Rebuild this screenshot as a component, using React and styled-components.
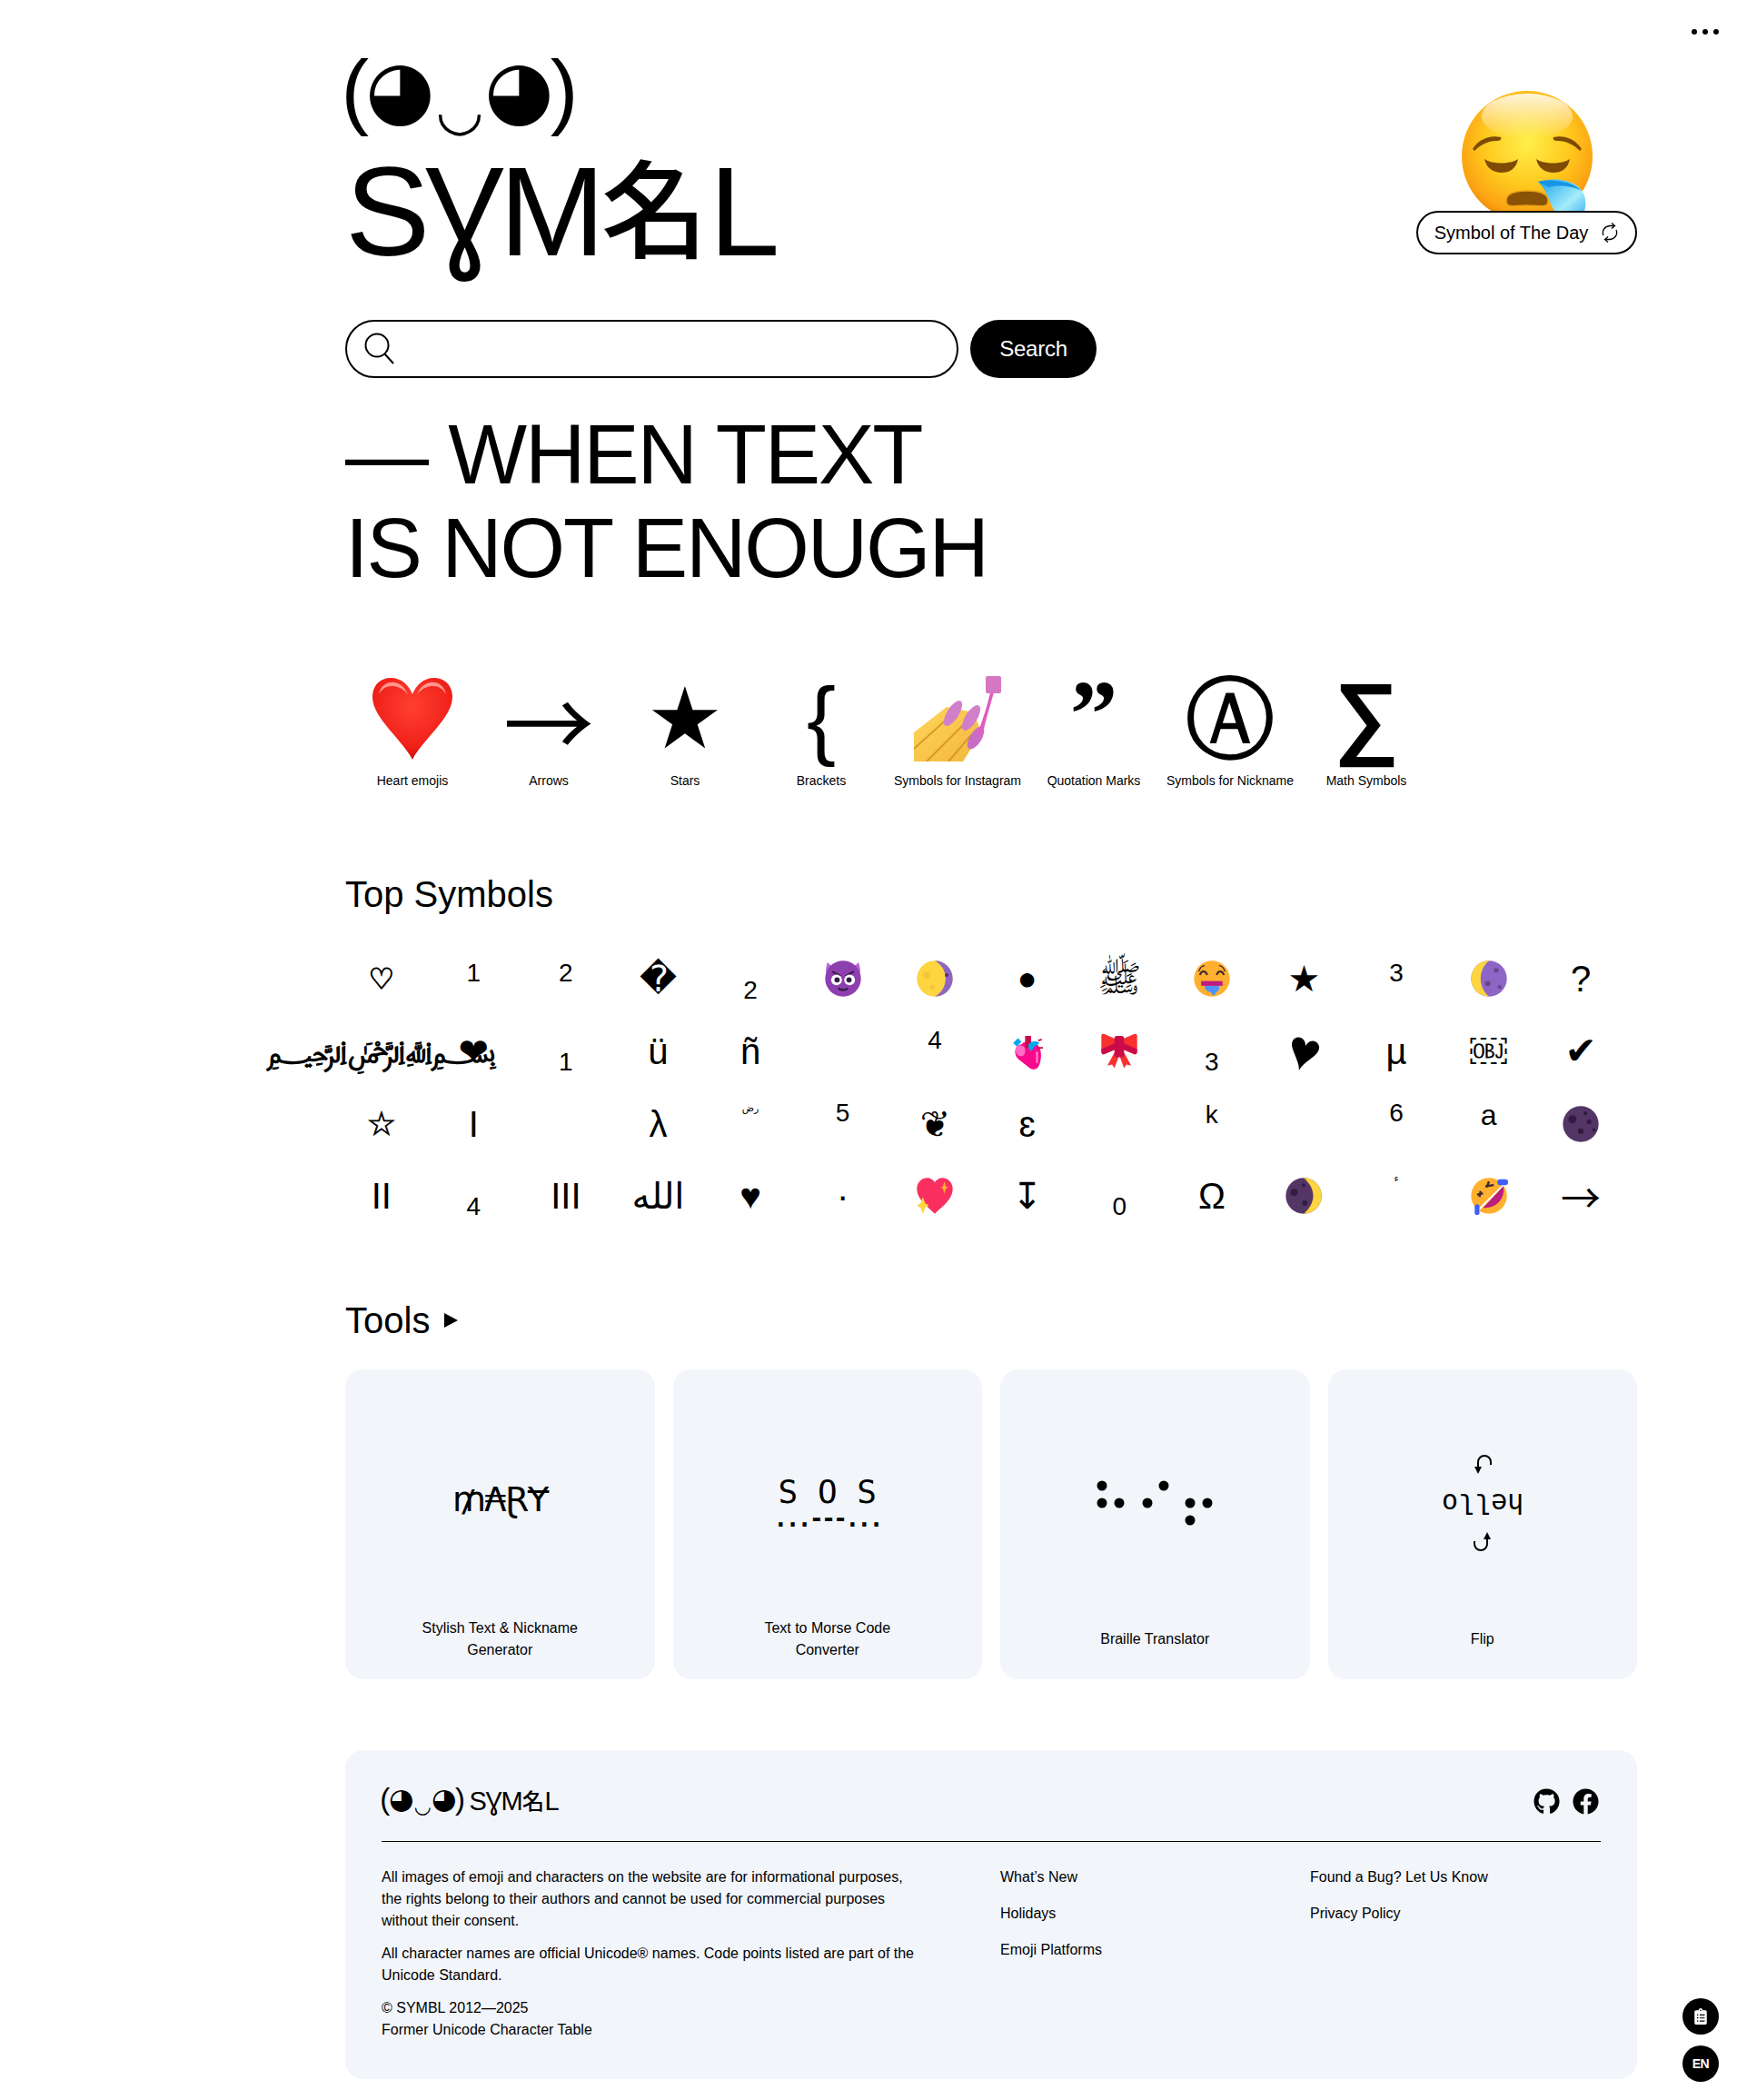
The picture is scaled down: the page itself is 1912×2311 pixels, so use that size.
import React from 'react';
import styled, { createGlobalStyle } from 'styled-components';
import { FaGithub, FaFacebook, FaClipboardList } from 'react-icons/fa';

const sans = '"Liberation Sans", "DejaVu Sans", "Noto Sans CJK SC", sans-serif';

const Global = createGlobalStyle`
    html, body {
        margin: 0;
        padding: 0;
        background: #fff;
        color: #000;
        font-family: ${sans};
    }
`;

const Page = styled.div`
    position: relative;
    box-sizing: border-box;
    width: 1912px;
    height: 2311px;
    padding: 53px 110px 0 380px;
    overflow: hidden;
`;
const MenuDots = styled.div`
    position: absolute;
    top: 32px;
    right: 20px;
    display: flex;
    gap: 6px;
    & > span {
        width: 6px;
        height: 6px;
        border-radius: 50%;
        background: #000;
    }
`;
const Header = styled.header`
    display: flex;
    justify-content: space-between;
    align-items: flex-start;
`;
const LogoCol = styled.div`
    display: flex;
    flex-direction: column;
`;
const Kaomoji = styled.div`
    display: flex;
    align-items: flex-start;
    height: ${({ $size }) => $size * 1.14}px;
    font-size: ${({ $size }) => $size}px;
    white-space: nowrap;
`;
const Paren = styled.span`
    font-size: 1em;
    line-height: 1.02em;
    margin: 0 -0.05em;
`;
const Eye = styled.span`
    font-family: "DejaVu Sans", sans-serif;
    font-size: 0.95em;
    line-height: 1.05em;
    margin: 0 0.01em;
`;
const Mouth = styled.span`
    font-family: "DejaVu Sans", sans-serif;
    font-size: 0.66em;
    line-height: 1em;
    margin-top: 0.62em;
`;
const Wordmark = styled.div`
    display: flex;
    align-items: baseline;
    height: ${({ $size }) => $size * 1.07}px;
    font-size: ${({ $size }) => $size}px;
    line-height: 1.07;
    letter-spacing: -0.04em;
    white-space: nowrap;
`;
const Kanji = styled.span`
    font-family: "Noto Sans CJK JP", sans-serif;
    font-size: 0.84em;
    font-weight: 500;
    letter-spacing: 0;
    transform: translateY(-0.05em);
    margin: 0 0.01em;
`;
const DayCol = styled.div`
    display: flex;
    flex-direction: column;
    align-items: center;
    margin-top: 47px;
`;
const DayFace = styled.div`
    width: 144px;
    height: 132px;
    overflow: hidden;
`;
const DayPill = styled.div`
    box-sizing: border-box;
    width: 243px;
    height: 48px;
    display: flex;
    align-items: center;
    justify-content: center;
    gap: 14px;
    background: #fff;
    border: 2px solid #000;
    border-radius: 24px;
    font-size: 20px;
`;
const SearchRow = styled.div`
    display: flex;
    gap: 13px;
    margin-top: 44px;
`;
const SearchBox = styled.div`
    box-sizing: border-box;
    width: 675px;
    height: 64px;
    display: flex;
    align-items: center;
    padding-left: 18px;
    border: 2px solid #000;
    border-radius: 32px;
`;
const SearchButton = styled.button`
    width: 139px;
    height: 64px;
    border: 0;
    border-radius: 32px;
    background: #000;
    color: #fff;
    font-family: ${sans};
    font-size: 24px;
    letter-spacing: -0.01em;
`;
const Tagline = styled.h1`
    margin: 33px 0 0;
    font-size: 92px;
    line-height: 103px;
    font-weight: 400;
    letter-spacing: -0.023em;
`;
const CategoryRow = styled.div`
    display: flex;
    margin-top: 86px;
    margin-left: -1px;
`;
const Category = styled.div`
    width: 150px;
    display: flex;
    flex-direction: column;
    align-items: center;
`;
const CategoryIcon = styled.div`
    height: 100px;
    display: flex;
    align-items: center;
    justify-content: center;
    font-family: ${({ $family }) => $family || '"DejaVu Sans", sans-serif'};
    font-weight: ${({ $weight }) => $weight || 400};
    font-size: ${({ $size }) => $size || 100}px;
    -webkit-text-stroke: ${({ $stroke }) => $stroke || 0}px #000;
    line-height: 100px;
    white-space: nowrap;
    transform: translateY(${({ $shift }) => $shift || 0}px);
`;
const CategoryLabel = styled.div`
    margin-top: 9px;
    font-size: 14px;
    line-height: 18px;
    white-space: nowrap;
`;
const SectionTitle = styled.h2`
    display: flex;
    align-items: center;
    gap: 16px;
    margin: ${({ $top }) => $top}px 0 0;
    font-size: 40px;
    line-height: 48px;
    font-weight: 400;
`;
const Triangle = styled.span`
    width: 0;
    height: 0;
    border-left: 15px solid #000;
    border-top: 8px solid transparent;
    border-bottom: 8px solid transparent;
`;
const SymbolGrid = styled.div`
    display: grid;
    grid-template-columns: repeat(14, 101.57px);
    grid-auto-rows: 79.6px;
    margin: 30px 0 0 -11px;
`;
const SymbolCell = styled.div`
    display: flex;
    align-items: center;
    justify-content: center;
`;
const Glyph = styled.span`
    display: block;
    font-family: ${({ $family }) => $family || sans};
    font-size: ${({ $size }) => $size || 40}px;
    font-weight: ${({ $weight }) => $weight || 400};
    -webkit-text-stroke: ${({ $stroke }) => $stroke || 0}px #000;
    line-height: 1;
    white-space: nowrap;
    transform: translateY(${({ $shift }) => $shift || 0}px) rotate(${({ $turn }) => $turn || 0}deg);
`;
const ToolGrid = styled.div`
    display: grid;
    grid-template-columns: repeat(4, 1fr);
    gap: 20px;
    margin-top: 30px;
`;
const ToolCard = styled.a`
    box-sizing: border-box;
    height: 341px;
    padding: 0 70px;
    display: flex;
    flex-direction: column;
    align-items: center;
    background: #f2f5fa;
    border-radius: 20px;
`;
const ToolArt = styled.div`
    height: 273px;
    display: flex;
    flex-direction: column;
    align-items: center;
    justify-content: center;
`;
const ToolName = styled.div`
    height: 68px;
    display: flex;
    align-items: flex-start;
    justify-content: center;
    text-align: center;
    font-size: 16px;
    line-height: 24px;
    padding-top: ${({ $single }) => ($single ? '12px' : '0')};
    box-sizing: border-box;
`;
const Stylish = styled.div`
    font-family: "DejaVu Sans", sans-serif;
    font-size: 38px;
    line-height: 44px;
    margin-top: 13px;
    letter-spacing: -0.04em;
`;
const Morse = styled.div`
    font-family: "DejaVu Sans Mono", monospace;
    font-size: 36px;
    line-height: 40px;
    margin-top: 15px;
`;
const MorseCode = styled.div`
    font-family: "DejaVu Sans Mono", monospace;
    font-size: 26px;
    line-height: 18px;
    font-weight: 700;
    letter-spacing: -2.5px;
`;
const BrailleDots = styled.svg`
    width: 128px;
    height: 50px;
    margin-top: 21px;
`;
const Flipped = styled.div`
    font-family: "DejaVu Sans Mono", monospace;
    font-size: 30px;
    line-height: 44px;
    transform: rotate(180deg);
    margin: 8px 0;
`;
const FlipArrow = styled.svg`
    width: 24px;
    height: 24px;
    transform: rotate(${({ $down }) => ($down ? 180 : 0)}deg);
`;
const FlipStack = styled.div`
    display: flex;
    flex-direction: column;
    align-items: center;
    margin-top: 21px;
`;
const Footer = styled.footer`
    box-sizing: border-box;
    height: 362px;
    margin-top: 78px;
    padding: 30px 40px 0;
    background: #f2f5fa;
    border-radius: 20px;
`;
const FooterTop = styled.div`
    box-sizing: border-box;
    height: 71px;
    padding-bottom: 18px;
    display: flex;
    align-items: center;
    justify-content: space-between;
    border-bottom: 1.5px solid #000;
`;
const FooterLogo = styled.div`
    display: flex;
    align-items: center;
    gap: 6px;
`;
const Socials = styled.div`
    display: flex;
    gap: 14px;
    font-size: 29px;
    margin-right: 2px;
    & > svg { display: block; }
`;
const FooterBody = styled.div`
    display: grid;
    grid-template-columns: 681px 341px 1fr;
    margin-top: 27px;
    font-size: 16px;
    line-height: 24px;
`;
const Legal = styled.div`
    & > p {
        margin: 0 0 12px;
        max-width: 595px;
    }
`;
const LinkList = styled.div`
    display: flex;
    flex-direction: column;
    gap: 16px;
`;
const Floating = styled.a`
    position: absolute;
    right: 20px;
    bottom: ${({ $bottom }) => $bottom}px;
    width: 40px;
    height: 40px;
    display: flex;
    align-items: center;
    justify-content: center;
    border-radius: 50%;
    background: #000;
    color: #fff;
    font-size: 14px;
    font-weight: 700;
    letter-spacing: -0.03em;
`;

const SleepyFace = () => (
    <svg width="144" height="144" viewBox="0 0 144 144">
        <defs>
            <radialGradient id="sf" cx="50%" cy="40%" r="60%">
                <stop offset="0" stopColor="#fff04a" />
                <stop offset="0.55" stopColor="#ffc81e" />
                <stop offset="0.88" stopColor="#fba312" />
                <stop offset="1" stopColor="#ec8a06" />
            </radialGradient>
            <linearGradient id="sh" x1="0" y1="0" x2="0" y2="1">
                <stop offset="0" stopColor="#fff" stopOpacity="0.85" />
                <stop offset="1" stopColor="#fff" stopOpacity="0" />
            </linearGradient>
            <linearGradient id="sd" x1="0" y1="0" x2="1" y2="1">
                <stop offset="0" stopColor="#14a0ea" />
                <stop offset="0.6" stopColor="#a5ecfb" />
                <stop offset="1" stopColor="#2aa5ef" />
            </linearGradient>
        </defs>
        <circle cx="72" cy="72" r="72" fill="url(#sf)" />
        <ellipse cx="72" cy="28" rx="50" ry="25" fill="url(#sh)" />
        <path d="M12 64C18 54 30 48 43 51C44 54 42 55 38 55C29 55 21 59 14 66Z" fill="#7e4a04" />
        <path d="M132 64C126 54 114 48 101 51C100 54 102 55 106 55C115 55 123 59 130 66Z" fill="#7e4a04" />
        <path d="M25 75C33 81 54 81 62 75C60 86 52 90 44 90C35 90 27 85 25 75Z" fill="#7e4a04" />
        <path d="M82 75C90 81 111 81 119 75C117 86 109 90 101 90C92 90 84 85 82 75Z" fill="#7e4a04" />
        <path d="M49 122C48 114 56 110 72 110C88 110 96 114 95 122C94 128 90 127 72 126C54 127 50 128 49 122Z" fill="#8a5205" stroke="#e8a215" strokeWidth="1.5" />
        <path d="M84 100C100 95 128 96 135 115C139 128 135 144 115 144C100 144 98 112 84 100Z" fill="url(#sd)" />
        <path d="M84 100C100 97 122 99 132 110C120 103 100 104 96 106Z" fill="#1696e4" />
    </svg>
);

const RedHeart = () => (
    <svg width="90" height="90" viewBox="0 0 90 90">
        <defs>
            <radialGradient id="rh" cx="50%" cy="35%" r="70%">
                <stop offset="0" stopColor="#ff4030" />
                <stop offset="0.7" stopColor="#f0211a" />
                <stop offset="1" stopColor="#c20a08" />
            </radialGradient>
        </defs>
        <path d="M45 90C34 68 1 44 1 21C1 8 10 0 21 0C33 0 41 8 45 18C49 8 57 0 69 0C80 0 89 8 89 21C89 44 56 68 45 90Z" fill="url(#rh)" />
        <path d="M8 18C10 8 18 4 25 5C32 6 37 11 40 18C34 11 28 9 22 9C15 9 11 13 8 18Z" fill="#ffb3a8" opacity="0.8" />
        <path d="M82 18C80 8 72 4 65 5C58 6 53 11 50 18C56 11 62 9 68 9C75 9 79 13 82 18Z" fill="#ffb3a8" opacity="0.8" />
    </svg>
);

const NailPolish = () => (
    <svg width="96" height="94" viewBox="0 0 96 94">
        <defs>
            <linearGradient id="nf" x1="0" y1="0" x2="1" y2="1">
                <stop offset="0" stopColor="#ffd65a" />
                <stop offset="1" stopColor="#f2b63c" />
            </linearGradient>
        </defs>
        <path d="M0 62L36 34L66 40L74 62L54 94L0 94Z" fill="url(#nf)" />
        <path d="M0 80L40 44M14 94L58 50M38 94L62 66" stroke="#d8982a" strokeWidth="2" fill="none" />
        <ellipse cx="43" cy="41" rx="6.500" ry="16" transform="rotate(32 43 41)" fill="#d27fc9" />
        <ellipse cx="63" cy="46" rx="6.500" ry="16" transform="rotate(32 63 46)" fill="#d27fc9" />
        <ellipse cx="68" cy="68" rx="6.500" ry="14" transform="rotate(32 68 68)" fill="#c86fc4" />
        <path d="M84 18L88 18L80 46L76 62L70 66C72 56 78 44 84 18Z" fill="#e15cc0" />
        <rect x="79" y="0" width="17" height="19" rx="2" fill="#d578c2" />
    </svg>
);

const Emoji = ({ children }) => (
    <svg width="42" height="42" viewBox="0 0 32 32">{children}</svg>
);

const MoonGibbous = () => (
    <Emoji>
        <circle cx="16" cy="16" r="15" fill="#fcd53f" />
        <path d="M16 1a15 15 0 0 1 0 30c6-3 9-9 9-15s-3-12-9-15z" fill="#8d65c5" />
        <circle cx="9" cy="13" r="3" fill="#f9c23c" />
        <circle cx="14" cy="23" r="2" fill="#f9c23c" />
        <circle cx="26" cy="13" r="1.5" fill="#533566" />
    </Emoji>
);
const MoonCrescent = () => (
    <Emoji>
        <circle cx="16" cy="16" r="15" fill="#8d65c5" />
        <path d="M16 1a15 15 0 0 0 0 30c-4-3-7-9-7-15s3-12 7-15z" fill="#fcd53f" />
        <circle cx="22" cy="9" r="2" fill="#6b438b" />
        <circle cx="15" cy="20" r="2.3" fill="#6b438b" />
        <circle cx="25" cy="23" r="1.6" fill="#6b438b" />
    </Emoji>
);
const MoonNew = () => (
    <Emoji>
        <circle cx="16" cy="16" r="15" fill="#533566" />
        <circle cx="9" cy="12" r="3.4" fill="#321b41" />
        <circle cx="20" cy="7" r="1.6" fill="#321b41" />
        <circle cx="23" cy="14" r="2" fill="#321b41" />
        <circle cx="16" cy="22" r="2.4" fill="#321b41" />
        <circle cx="27" cy="21" r="1.5" fill="#321b41" />
    </Emoji>
);
const MoonDark = () => (
    <Emoji>
        <circle cx="16" cy="16" r="15" fill="#533566" />
        <path d="M16 1a15 15 0 0 1 0 30c4-3 8-9 8-15s-4-12-8-15z" fill="#fcd53f" />
        <circle cx="8" cy="13" r="3" fill="#321b41" />
        <circle cx="17" cy="22" r="2.2" fill="#321b41" />
        <circle cx="16" cy="7" r="1.5" fill="#321b41" />
    </Emoji>
);
const Devil = () => (
    <Emoji>
        <path d="M3 2C1 8 1 13 4 16L11 5C8 6 5 5 3 2ZM29 2C31 8 31 13 28 16L21 5C24 6 27 5 29 2Z" fill="#b565d8" />
        <circle cx="16" cy="16" r="15" fill="#8d3fb0" />
        <path d="M7 10L14 14M25 10L18 14" stroke="#321b41" strokeWidth="1.6" />
        <circle cx="10.5" cy="17" r="4.5" fill="#fff" />
        <circle cx="21.5" cy="17" r="4.5" fill="#fff" />
        <circle cx="11" cy="17" r="2.2" fill="#321b41" />
        <circle cx="21" cy="17" r="2.2" fill="#321b41" />
        <path d="M12 24C14 26 18 26 20 24" stroke="#321b41" strokeWidth="1.8" fill="none" />
    </Emoji>
);
const DroolFace = () => (
    <Emoji>
        <circle cx="16" cy="16" r="15" fill="#ffb02e" />
        <path d="M6 13C7 9 11 9 12 13M20 13C21 9 25 9 26 13" stroke="#402a32" strokeWidth="1.6" fill="none" />
        <path d="M5 10C6 7 8 5 10 5M27 10C26 7 24 5 22 5" stroke="#402a32" strokeWidth="1" fill="none" />
        <path d="M7 18H25V22H7Z" fill="#bb1d80" />
        <path d="M10 22H22V25C21 26 21 27 20 27C19 27 19 30 17.5 30C16 30 16 27 14 27C12 27 11 25 10 24Z" fill="#5092ff" />
    </Emoji>
);
const OrganHeart = () => (
    <Emoji>
        <path d="M11 10C14 6 22 8 25 11C28 15 28 22 26 27C25 31 21 32 18 30L9 23C5 20 5 15 7 12C8 11 10 10 11 10Z" fill="#f70a8d" />
        <path d="M6 14C7 11 10 10 13 12C15 15 14 20 11 20C8 20 6 18 6 14Z" fill="#ff6dc6" />
        <path d="M14 3H19V12C19 14 14 14 14 12Z" fill="#ca0b4a" />
        <path d="M4 9L8 5L11 8L7 12Z" fill="#00a6ed" />
        <path d="M17 10C19 7 24 7 26 9L24 11C22 11 21 13 20 15C18 16 16 13 17 10Z" fill="#00a6ed" />
        <path d="M24 13H29M25 7L28 6" stroke="#ca0b4a" strokeWidth="1.4" />
        <rect x="23" y="16" width="2" height="10" rx="1" fill="#ff6dc6" />
    </Emoji>
);
const Ribbon = () => (
    <Emoji>
        <path d="M13 15L6 28L10 27L12 30L16 19L20 30L22 27L26 28L19 15Z" fill="#f8312f" />
        <path d="M1 3C1 1 3 1 5 2L14 6V14L4 18C2 19 1 18 1 16ZM31 3C31 1 29 1 27 2L18 6V14L28 18C30 19 31 18 31 16Z" fill="#f8312f" />
        <path d="M1 14L13 9V14L4 18C2 19 1 18 1 16ZM31 14L19 9V14L28 18C30 19 31 18 31 16Z" fill="#ca0b4a" />
        <rect x="12" y="3" width="8" height="18" rx="2" fill="#ca0b4a" />
    </Emoji>
);
const SparkHeart = () => (
    <Emoji>
        <path d="M16 31C10 25 1 19 1 10C1 5 5 1 9.500 1C12 1 15 2.500 16 5C17 2.500 20 1 22.500 1C27 1 31 5 31 10C31 19 22 25 16 31Z" fill="#f92f60" />
        <path d="M24 4L25.200 8L27 9L25.200 10L24 14L22.800 10L21 9L22.800 8Z" fill="#ffb02e" />
        <path d="M6 17L7.800 22L11 24L7.800 26L6 31L4.200 26L1 24L4.200 22Z" fill="#fcd53f" />
    </Emoji>
);
const RoflFace = () => (
    <Emoji>
        <circle cx="16" cy="16" r="15" fill="#ffb02e" />
        <path d="M29 6L7 28" stroke="#fff" strokeWidth="1.5" />
        <path d="M28 8C30 18 22 27 11 26Z" fill="#bb1d80" />
        <path d="M13 8L20 7M16 4L14 9M6 15L11 14M9 12L8 17" stroke="#402a32" strokeWidth="1.800" fill="none" />
        <rect x="23" y="2" width="9" height="5" rx="2.500" fill="#3f5fff" />
        <rect x="4" y="23" width="4" height="9" rx="2" fill="#3f5fff" />
    </Emoji>
);

const SyncIcon = () => (
    <svg width="20" height="22" viewBox="0 0 20 22" fill="none" stroke="#000" strokeWidth="1.3">
        <path d="M3 14C1 9 4 4 10 3.500H15" />
        <path d="M12 0.500L15.500 3.500L12 6.500" />
        <path d="M17 8C19 13 16 18 10 18.500H5" />
        <path d="M8 15.500L4.500 18.500L8 21.500" />
    </svg>
);

const SearchIcon = () => (
    <svg width="36" height="36" viewBox="0 0 36 36" fill="none" stroke="#000" strokeWidth="2">
        <circle cx="15" cy="14" r="12.500" />
        <path d="M23.500 23.500L33 34" />
    </svg>
);

const arrowFont = '"Noto Sans CJK SC", sans-serif';

// cells of the top symbols table, in reading order
const symbols = [
    { t: '♡', size: 32, stroke: 1 }, { t: '1', size: 28, shift: -6 }, { t: '2', size: 28, shift: -6 }, { t: '�' }, { t: '2', size: 28, shift: 13 },
    { art: <Devil /> }, { art: <MoonGibbous /> }, { t: '●', size: 36 }, { t: 'ﷺ' }, { art: <DroolFace /> }, { t: '★' }, { t: '3', size: 28, shift: -6 }, { art: <MoonCrescent /> }, { t: '?' },

    { t: '﷽', size: 33, weight: 700 }, { t: '❤' }, { t: '1', size: 28, shift: 12 }, { t: 'ü' }, { t: 'ñ' }, {}, { t: '4', size: 28, shift: -12 },
    { art: <OrganHeart /> }, { art: <Ribbon /> }, { t: '3', size: 28, shift: 12 }, { t: '♥', size: 62, turn: 15 }, { t: 'µ' }, { t: '￼' }, { t: '✔', size: 42 },

    { t: '☆', size: 36, stroke: 0.8 }, { t: 'I' }, {}, { t: 'λ' }, { t: 'رض', size: 11, shift: -17 }, { t: '5', size: 28, shift: -12 }, { t: '❦' }, { t: 'ɛ' }, {},
    { t: 'k', size: 28, shift: -10 }, {}, { t: '6', size: 28, shift: -12 }, { t: 'a', size: 32, shift: -10 }, { art: <MoonNew /> },

    { t: 'II' }, { t: '4', size: 28, shift: 12 }, { t: 'III' }, { t: 'الله' }, { t: '♥' }, { t: '·' }, { art: <SparkHeart /> }, { t: '↧' }, { t: '0', size: 28, shift: 12 }, { t: 'Ω' },
    { art: <MoonDark /> }, { t: 'ء', size: 11, shift: -20 }, { art: <RoflFace /> }, { t: '→', family: arrowFont, size: 44 }
];

const categories = [
    { label: 'Heart emojis', art: <RedHeart /> },
    { label: 'Arrows', art: '→', family: arrowFont, size: 100 },
    { label: 'Stars', art: '★', size: 94 },
    { label: 'Brackets', art: '{', family: '"Liberation Sans", sans-serif', size: 96 },
    { label: 'Symbols for Instagram', art: <NailPolish /> },
    { label: 'Quotation Marks', art: '”', family: '"Liberation Serif", serif', weight: 700, size: 105, shift: -4 },
    { label: 'Symbols for Nickname', art: 'Ⓐ', size: 98, stroke: 1.5 },
    { label: 'Math Symbols', art: '∑', family: '"Liberation Sans", sans-serif', size: 100, weight: 700, shift: -4 }
];

const Face = ({ size }) => (
    <Kaomoji $size={size}>
        <Paren>(</Paren><Eye>◕</Eye><Mouth>◡</Mouth><Eye>◕</Eye><Paren>)</Paren>
    </Kaomoji>
);
const Name = ({ size }) => (
    <Wordmark $size={size}>SƔM<Kanji>名</Kanji>L</Wordmark>
);

export default function App() {
    return <Page>
        <Global />
        <MenuDots><span /><span /><span /></MenuDots>
        <Header>
            <LogoCol>
                <Face size={92} />
                <Name size={140} />
            </LogoCol>
            <DayCol>
                <DayFace><SleepyFace /></DayFace>
                <DayPill>Symbol of The Day <SyncIcon /></DayPill>
            </DayCol>
        </Header>
        <SearchRow>
            <SearchBox><SearchIcon /></SearchBox>
            <SearchButton>Search</SearchButton>
        </SearchRow>
        <Tagline>— WHEN TEXT<br />IS NOT ENOUGH</Tagline>
        <CategoryRow>
            {categories.map(item => (
                <Category key={item.label}>
                    <CategoryIcon $size={item.size} $family={item.family} $weight={item.weight} $shift={item.shift} $stroke={item.stroke}>{item.art}</CategoryIcon>
                    <CategoryLabel>{item.label}</CategoryLabel>
                </Category>
            ))}
        </CategoryRow>
        <SectionTitle $top={92}>Top Symbols</SectionTitle>
        <SymbolGrid>
            {symbols.map((item, i) => (
                <SymbolCell key={i}>
                    {item.art}
                    {item.t && <Glyph $size={item.size} $shift={item.shift} $turn={item.turn} $weight={item.weight} $stroke={item.stroke} $family={item.family}>{item.t}</Glyph>}
                </SymbolCell>
            ))}
        </SymbolGrid>
        <SectionTitle $top={73}>Tools <Triangle /></SectionTitle>
        <ToolGrid>
            <ToolCard>
                <ToolArt><Stylish>₥₳ⱤɎ</Stylish></ToolArt>
                <ToolName>Stylish Text &amp; Nickname Generator</ToolName>
            </ToolCard>
            <ToolCard>
                <ToolArt>
                    <Morse>S O S</Morse>
                    <MorseCode>...---...</MorseCode>
                </ToolArt>
                <ToolName>Text to Morse Code Converter</ToolName>
            </ToolCard>
            <ToolCard>
                <ToolArt>
                    <BrailleDots viewBox="0 0 128 50" fill="#000">
                        <circle cx="6" cy="6" r="5.500" />
                        <circle cx="6" cy="25" r="5.500" />
                        <circle cx="25" cy="25" r="5.500" />
                        <circle cx="56" cy="25" r="5.500" />
                        <circle cx="74" cy="6" r="5.500" />
                        <circle cx="103" cy="25" r="5.500" />
                        <circle cx="122" cy="25" r="5.500" />
                        <circle cx="103" cy="44" r="5.500" />
                    </BrailleDots>
                </ToolArt>
                <ToolName $single>Braille Translator</ToolName>
            </ToolCard>
            <ToolCard>
                <ToolArt>
                    <FlipStack>
                        <FlipArrow viewBox="0 0 24 24" fill="none" stroke="#000" strokeWidth="2">
                            <path d="M21 12V9C21 5 18 2 14 2C10 2 7 5 7 9V14" />
                            <path d="M3 14H11L7 22Z" fill="#000" stroke="none" />
                        </FlipArrow>
                        <Flipped>hello</Flipped>
                        <FlipArrow $down viewBox="0 0 24 24" fill="none" stroke="#000" strokeWidth="2">
                            <path d="M21 12V9C21 5 18 2 14 2C10 2 7 5 7 9V14" />
                            <path d="M3 14H11L7 22Z" fill="#000" stroke="none" />
                        </FlipArrow>
                    </FlipStack>
                </ToolArt>
                <ToolName $single>Flip</ToolName>
            </ToolCard>
        </ToolGrid>
        <Footer>
            <FooterTop>
                <FooterLogo>
                    <Face size={33} />
                    <Name size={29} />
                </FooterLogo>
                <Socials><FaGithub /><FaFacebook /></Socials>
            </FooterTop>
            <FooterBody>
                <Legal>
                    <p>All images of emoji and characters on the website are for informational purposes, the rights belong to their authors and cannot be used for commercial purposes without their consent.</p>
                    <p>All character names are official Unicode® names. Code points listed are part of the Unicode Standard.</p>
                    <p>© SYMBL 2012—2025<br />Former Unicode Character Table</p>
                </Legal>
                <LinkList>
                    <span>What’s New</span>
                    <span>Holidays</span>
                    <span>Emoji Platforms</span>
                </LinkList>
                <LinkList>
                    <span>Found a Bug? Let Us Know</span>
                    <span>Privacy Policy</span>
                </LinkList>
            </FooterBody>
        </Footer>
        <Floating $bottom={72}><FaClipboardList size={18} /></Floating>
        <Floating $bottom={20}>EN</Floating>
    </Page>;
}
